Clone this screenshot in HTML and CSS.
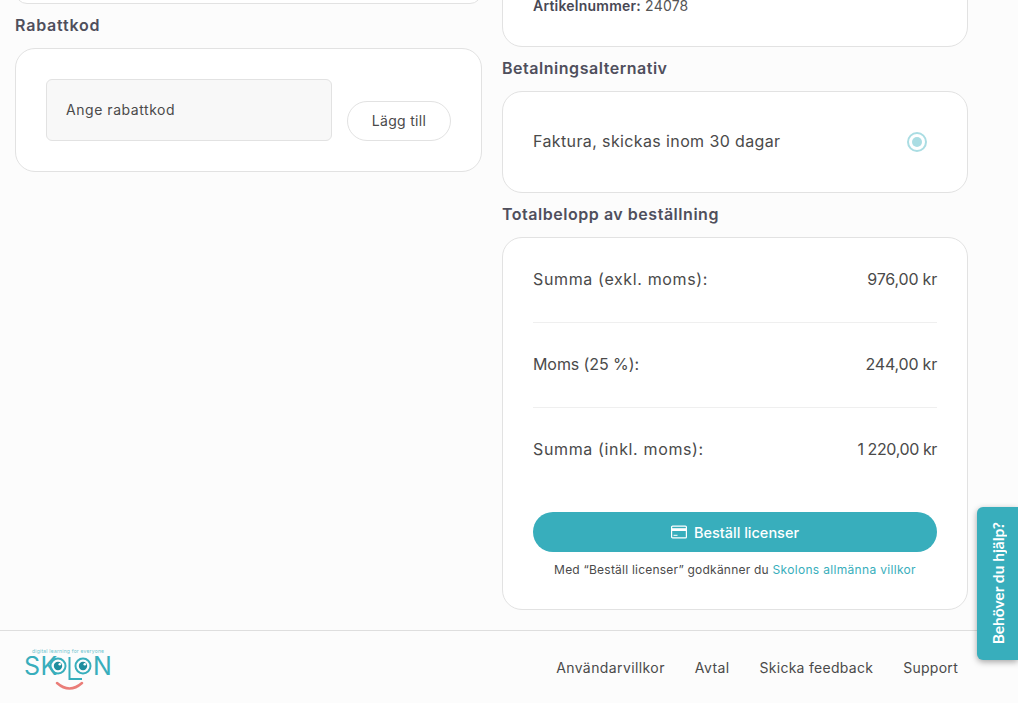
FILE: index.html
```html
<!DOCTYPE html>
<html lang="sv">
<head>
<meta charset="utf-8">
<title>Skolon</title>
<link rel="stylesheet" href="styles.css">
</head>
<body>
<main class="columns">
  <section class="col col-left">
    <div class="card card-stub-left"></div>
    <h2 class="heading heading-code">Rabattkod</h2>
    <div class="card card-code">
      <div class="code-input"><span class="code-text">Ange rabattkod</span></div>
      <button class="btn-add"><span class="add-text">Lägg till</span></button>
    </div>
  </section>
  <section class="col col-right">
    <div class="card card-article"><p class="article"><b>Artikelnummer:</b> 24078</p></div>
    <h2 class="heading">Betalningsalternativ</h2>
    <div class="card card-pay">
      <span class="row-text pay-text">Faktura, skickas inom 30 dagar</span>
      <span class="radio"><span class="radio-dot"></span></span>
    </div>
    <h2 class="heading">Totalbelopp av beställning</h2>
    <div class="card card-total">
      <div class="row row-line"><span class="row-text label-wide">Summa (exkl. moms):</span><span class="row-text amount">976,00 kr</span></div>
      <div class="row row-line"><span class="row-text label-tight">Moms (25 %):</span><span class="row-text amount">244,00 kr</span></div>
      <div class="row row-last"><span class="row-text label-wide">Summa (inkl. moms):</span><span class="row-text amount-long">1 220,00 kr</span></div>
      <button class="btn-order">
        <svg class="card-icon" width="16" height="14" viewBox="0 0 16 14" fill="none"><rect x=".6" y="1.100" width="14.800" height="11.800" rx="1" stroke="#fff" stroke-width="1.200"/><rect x="1" y="3.200" width="14" height="2.800" fill="#fff"/><rect x="2.500" y="9.800" width="4" height="1" fill="#fff"/></svg>
        <span>Beställ licenser</span>
      </button>
      <p class="terms">Med “Beställ licenser” godkänner du <a class="terms-link">Skolons allmänna villkor</a></p>
    </div>
  </section>
</main>
<footer class="footer">
  <svg class="logo" width="92" height="46" viewBox="0 0 92 46">
    <text class="logo-tag" x="8" y="5.500" textLength="72">digital learning for everyone</text>
    <text class="logo-word" x="0" y="28">SK</text>
    <circle cx="34" cy="19" r="7.500" fill="none" stroke="#38aebc" stroke-width="2"/>
    <circle cx="34" cy="19" r="4.200" fill="#1f8e9e"/>
    <circle cx="35.800" cy="17.200" r="1.300" fill="#fff"/>
    <path d="M45.500 10V32H58" fill="none" stroke="#38aebc" stroke-width="2"/>
    <circle cx="59" cy="19" r="7.500" fill="none" stroke="#38aebc" stroke-width="2"/>
    <circle cx="59" cy="19" r="4.200" fill="#1f8e9e"/>
    <circle cx="60.800" cy="17.200" r="1.300" fill="#fff"/>
    <text class="logo-word" x="69" y="28">N</text>
    <path d="M33 36Q45.500 47 58 36" fill="none" stroke="#ea7d78" stroke-width="2.500" stroke-linecap="round"/>
  </svg>
  <nav class="links">
    <a class="link link-wide">Användarvillkor</a>
    <a class="link link-wide">Avtal</a>
    <a class="link">Skicka feedback</a>
    <a class="link">Support</a>
  </nav>
</footer>
<button class="help"><span class="help-text">Behöver du hjälp?</span></button>
</body>
</html>
```
FILE: styles.css
```css
* { box-sizing: border-box; }
html, body { margin: 0; height: 703px; overflow: hidden; }
body {
  background: #fcfcfc;
  font-family: Inter, "Open Sans", sans-serif;
  color: #484854;
  display: flex;
  flex-direction: column;
}
.columns {
  display: flex;
  gap: 20px;
  padding-left: 15px;
  height: 630px;
  align-items: flex-start;
}
.col { width: 467px; flex: none; }
.col-right { width: 466px; }
.card {
  background: #fff;
  border: 1px solid #e2e2e2;
  border-radius: 20px;
}
.card-stub-left { height: 24px; margin-top: -20px; }
.heading {
  margin: 9px 0 11px;
  font-size: 16px;
  font-weight: 600;
  line-height: 24px;
  color: #4f4f5c;
  letter-spacing: .53px;
}
.heading-code { letter-spacing: .8px; }
.card-code {
  height: 124px;
  padding: 30px;
  display: flex;
  align-items: flex-end;
  gap: 15px;
}
.code-input {
  width: 286px;
  height: 62px;
  background: #f8f8f8;
  border: 1px solid #e2e2e2;
  border-radius: 6px;
  padding-left: 19px;
  display: flex;
  align-items: center;
  font-size: 14px;
  letter-spacing: .55px;
  color: #4a4a4a;
}
.code-text { padding-bottom: 1px; }
.btn-add {
  width: 104px;
  height: 40px;
  background: #fff;
  border: 1px solid #e2e2e2;
  border-radius: 20px;
  font: 14px Inter, sans-serif;
  letter-spacing: .3px;
  color: #4a4a4a;
  padding: 0;
}
.add-text { display: block; padding-bottom: 1px; }
.card-article {
  height: 67px;
  margin-top: -20px;
  padding: 15px 30px 0;
}
.article { margin: 0; font-size: 14px; line-height: 20px; letter-spacing: .22px; color: #555; }
.article b { font-weight: 600; color: #484854; }
.card-pay {
  height: 102px;
  padding: 0 40px 0 30px;
  display: flex;
  align-items: center;
  justify-content: space-between;
}
.row-text { font-size: 16px; color: #4a4a4a; padding-bottom: 2px; }
.pay-text { letter-spacing: .38px; }
.label-wide { letter-spacing: .64px; }
.label-tight { letter-spacing: -.08px; }
.amount { letter-spacing: -.2px; }
.amount-long { letter-spacing: -.39px; }
.radio {
  width: 20px;
  height: 20px;
  border: 2px solid #aadde3;
  border-radius: 50%;
  display: flex;
  align-items: center;
  justify-content: center;
}
.radio-dot { width: 10px; height: 10px; border-radius: 50%; background: #aadde3; }
.card-total { height: 373px; padding: 0 30px; }
.row {
  height: 85px;
  display: flex;
  align-items: center;
  justify-content: space-between;
}
.row-line { border-bottom: 1px solid #efefef; }
.row-last { padding-bottom: 1px; }
.btn-order {
  width: 404px;
  height: 40px;
  margin-top: 19px;
  background: #38aebc;
  border: 0;
  border-radius: 20px;
  color: #fff;
  font: 500 14.500px Inter, sans-serif;
  display: flex;
  align-items: center;
  justify-content: center;
  gap: 7px;
  padding: 0;
}
.terms {
  margin: 9px 0 0;
  font-size: 12px;
  line-height: 18px;
  text-align: center;
  letter-spacing: .22px;
  color: #4a4a4a;
}
.terms-link { color: #38aebc; letter-spacing: .32px; }
.footer {
  height: 73px;
  border-top: 1px solid #dedede;
  display: flex;
  align-items: flex-start;
  justify-content: space-between;
  padding: 16px 60px 0 24px;
}
.logo { display: block; }
.logo-tag { font: 5px Inter, sans-serif; fill: #6cc3ce; }
.logo-word { font: 400 25px Inter, sans-serif; letter-spacing: .5px; fill: #38aebc; }
.links { display: flex; gap: 30px; margin-top: 11px; }
.link { font-size: 14px; line-height: 20px; letter-spacing: .28px; color: #4a4a4a; }
.link-wide { letter-spacing: .4px; }
.help {
  position: absolute;
  left: 977px;
  top: 507px;
  width: 41px;
  height: 153px;
  background: #38aebc;
  border: 0;
  border-radius: 6px 0 0 6px;
  box-shadow: 0 2px 6px rgba(0,0,0,.35);
  padding: 0;
  display: flex;
  align-items: center;
  justify-content: center;
}
.help-text {
  writing-mode: vertical-rl;
  transform: rotate(180deg);
  color: #fff;
  font: 700 15.500px Lato, sans-serif;
  white-space: nowrap;
}
```
